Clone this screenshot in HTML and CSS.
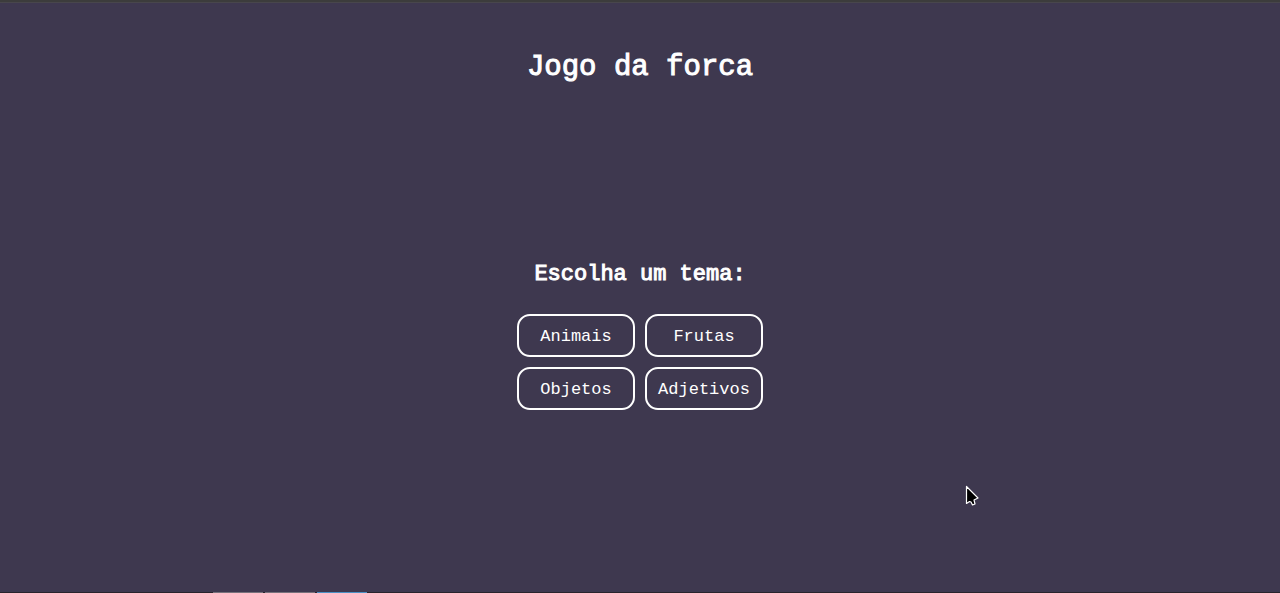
FILE: index.html
```html
<!DOCTYPE html>
<html lang="pt-BR">
<head>
<meta charset="utf-8">
<meta name="viewport" content="width=device-width, initial-scale=1">
<title>Jogo da forca</title>
<link rel="stylesheet" href="styles.css">
</head>
<body class="page">
<div class="window-edge"></div>
<header class="header"><h1 class="title">Jogo da forca</h1></header>
<main class="picker">
<h2 class="subtitle">Escolha um tema:</h2>
<div class="themes">
<button class="theme" type="button">Animais</button>
<button class="theme" type="button">Frutas</button>
<button class="theme" type="button">Objetos</button>
<button class="theme" type="button">Adjetivos</button>
</div>
</main>
<div class="taskbar"><span class="task"></span><span class="task"></span><span class="task task-active"></span></div>
<svg class="cursor" width="14" height="22" viewBox="0 0 14 22" aria-hidden="true"><path d="M1.5 1.5V18.5L4.5 16.5L6 17L7.5 20L10 19L9 15L13 13Z" fill="#000" stroke="#fff" stroke-width="1.2" stroke-linejoin="round"/></svg>
</body>
</html>
```
FILE: styles.css
```css
* {
  box-sizing: border-box;
}

.page {
  display: flex;
  flex-direction: column;
  min-height: 100vh;
  margin: 0;
  background: #3e384f;
  color: #fff;
  font-family: "Liberation Mono", monospace;
}

.window-edge {
  height: 3px;
  background: #3c3c3c;
  border-bottom: 1px solid #48464c;
}

.header {
  padding-top: 45px;
  text-align: center;
}

.title,
.subtitle {
  margin: 0;
  font-weight: 400;
  -webkit-text-stroke: 1px #fff;
}

.title {
  font-size: 29px;
  line-height: 40px;
}

.picker {
  display: flex;
  flex: 1;
  flex-direction: column;
  align-items: center;
  gap: 24px;
  padding-top: 171px;
}

.subtitle {
  font-size: 22px;
  line-height: 31px;
}

.themes {
  display: grid;
  grid-template-columns: repeat(2, 118px);
  gap: 10px;
}

.theme {
  padding: 10px 8px 8px;
  border: 2px solid #fff;
  border-radius: 13px;
  background: transparent;
  color: #fff;
  font-family: inherit;
  font-size: 17px;
  line-height: 21px;
  cursor: pointer;
}

.taskbar {
  display: flex;
  gap: 2px;
  height: 1px;
  padding-left: 213px;
  background: #28242d;
}

.task {
  width: 50px;
  background: #77727c;
}

.task-active {
  background: #4b91c5;
}

.cursor {
  position: absolute;
  top: 485px;
  left: 965px;
}
```
